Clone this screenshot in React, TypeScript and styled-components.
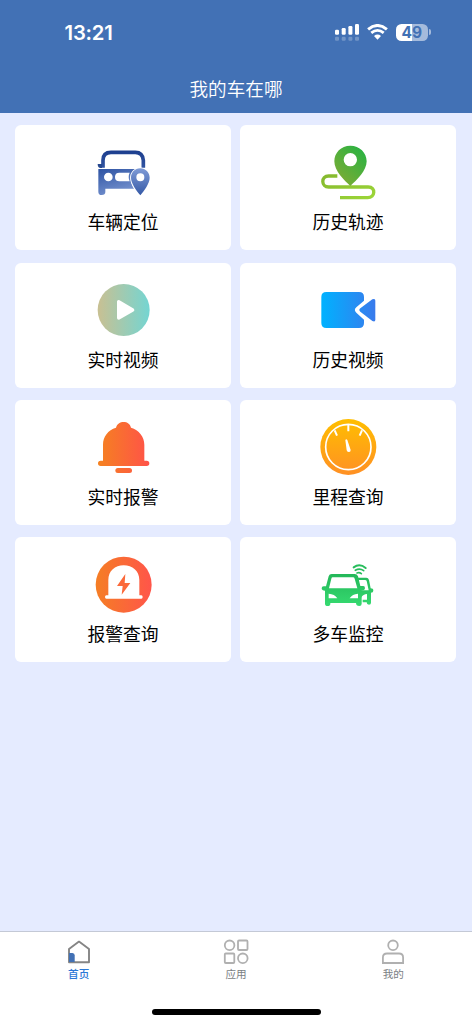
import React from 'react';
import styled, { createGlobalStyle } from 'styled-components';

const GlobalStyle = createGlobalStyle`
  * { box-sizing: border-box; }
  body {
    margin: 0;
    font-family: "Noto Sans CJK SC", sans-serif;
    background: #e5ebff;
  }
`;

const Screen = styled.div`
  display: flex;
  flex-direction: column;
  width: 100%;
  height: 1024px;
  background: #e5ebff;
  overflow: hidden;
`;

const Header = styled.header`
  display: flex;
  flex-direction: column;
  height: 113px;
  flex: none;
  background: #4271b5;
  color: #fff;
`;

const StatusBar = styled.div`
  display: flex;
  align-items: center;
  justify-content: space-between;
  height: 64px;
  padding: 0 41.5px 0 64.5px;
`;

const Clock = styled.span`
  padding-top: 1px;
  font: 600 20.3px/24px Inter, sans-serif;
  letter-spacing: -0.2px;
`;

const StatusIcons = styled.div`
  display: flex;
  align-items: center;
  gap: 8px;
`;

const Battery = styled.div`
  display: flex;
  align-items: center;
`;

const BatteryBody = styled.div<{ $level: number }>`
  width: 31.5px;
  height: 17px;
  border-radius: 5.5px;
  text-align: center;
  font: 700 15.5px/17px Inter, sans-serif;
  color: #4271b5;
  background: ${(p) => `linear-gradient(90deg, #fff ${p.$level}%, #a5bbdc ${p.$level}%)`};
`;

const BatteryTip = styled.div`
  width: 2px;
  height: 6px;
  margin-left: 1px;
  border-radius: 0 2px 2px 0;
  background: #a5bbdc;
`;

const Title = styled.h1`
  margin: 10px 0 0;
  text-align: center;
  font-size: 18.6px;
  line-height: 28px;
  font-weight: 350;
`;

const Grid = styled.main`
  flex: 1;
  display: grid;
  grid-template-columns: 1fr 1fr;
  grid-auto-rows: 125px;
  gap: 12.3px 9px;
  padding: 12.4px 16px 0 15px;
`;

const Card = styled.section`
  display: flex;
  flex-direction: column;
  align-items: center;
  padding-top: 18px;
  border-radius: 6px;
  background: #fff;
`;

const CardIcon = styled.svg`
  width: 60px;
  height: 60px;
  flex: none;
`;

const Label = styled.span`
  margin-top: 5px;
  font-size: 17.8px;
  line-height: 26px;
  color: #000;
`;

const TabBar = styled.nav`
  display: grid;
  grid-template-columns: repeat(3, 1fr);
  height: 76px;
  flex: none;
  padding-top: 7px;
  border-top: 1px solid #c4c9d6;
  background: #fff;
`;

const Tab = styled.div<{ $active?: boolean }>`
  display: flex;
  flex-direction: column;
  align-items: center;
  gap: 1px;
  font-size: 10.6px;
  line-height: 16px;
  font-weight: ${(p) => (p.$active ? 500 : 400)};
  color: ${(p) => (p.$active ? '#2b78d6' : '#7a7e83')};
`;

const TabIcon = styled.svg`
  width: 26px;
  height: 26px;
`;

const HomeArea = styled.footer`
  display: flex;
  justify-content: center;
  height: 17px;
  flex: none;
  padding-top: 2px;
  background: #fff;
`;

const HomeIndicator = styled.div`
  width: 169px;
  height: 6px;
  border-radius: 3px;
  background: #000;
`;

type GradientProps = { id: string; from: string; to: string; x2?: number; y2?: number };
const Gradient = ({ id, from, to, x2 = 1, y2 = 0 }: GradientProps) => (
  <linearGradient id={id} x1="0" y1="0" x2={x2} y2={y2}>
    <stop offset="0" stopColor={from} />
    <stop offset="1" stopColor={to} />
  </linearGradient>
);

const CarPin = () => (
  <CardIcon viewBox="39 24 180 180">
    <defs>
      <linearGradient id="navy" gradientUnits="userSpaceOnUse" x1="0" y1="45" x2="0" y2="105">
        <stop offset="0" stopColor="#1b3d8d" />
        <stop offset="1" stopColor="#3457a4" />
      </linearGradient>
      <linearGradient id="navyPin" gradientUnits="userSpaceOnUse" x1="0" y1="100" x2="0" y2="180">
        <stop offset="0" stopColor="#7f9bd6" />
        <stop offset="1" stopColor="#365aa7" />
      </linearGradient>
      <linearGradient id="navyBody" gradientUnits="userSpaceOnUse" x1="75" y1="100" x2="100" y2="180">
        <stop offset="0" stopColor="#3156a5" />
        <stop offset="1" stopColor="#7390cd" />
      </linearGradient>
    </defs>
    <path d="M69 98V76Q69 52 93 52H166Q188 52 190 76V98" fill="none" stroke="url(#navy)" strokeWidth="11" />
    <path d="M53 87H66V99H60Q53 98 53 87Z" fill="#26488f" />
    <path fill="url(#navyBody)" fillRule="evenodd" d="M55 102H172Q151 108 151 127Q151 145 162 161H76V171Q76 180 65 180Q55 180 55 170ZM85 113A13 13 0 1 0 85 139A13 13 0 1 0 85 113ZM118 113Q105 113 105 126Q105 139 118 139H149Q143 126 149 113Z" />
    <path fill="url(#navyPin)" stroke="#fff" strokeWidth="5" paintOrder="stroke" fillRule="evenodd" d="M181 100C164 100 153 113 153 128C153 145 169 167 181 181C193 167 209 145 209 128C209 113 197 100 181 100ZM181 115A12 12 0 1 1 181 139A12 12 0 1 1 181 115Z" />
  </CardIcon>
);

const RoutePin = () => (
  <CardIcon viewBox="54 24 180 180">
    <defs>
      <Gradient id="route" from="#85b92e" to="#9cd638" y2={1} />
      <linearGradient id="pin" x1="1" y1="0" x2="0.3" y2="0.9">
        <stop offset="0" stopColor="#20b344" />
        <stop offset="1" stopColor="#76ac35" />
      </linearGradient>
    </defs>
    <path d="M112 123H86C62 123 63 156 86 156H205C228 156 226 188 203 188H120" fill="none" stroke="url(#route)" strokeWidth="10" />
    <path fill="url(#pin)" fillRule="evenodd" d="M151 32C123 32 103 53 103 79C103 108 132 135 151 153C170 135 200 108 200 79C200 53 179 32 151 32ZM151 54A20 20 0 1 1 151 94A20 20 0 1 1 151 54Z" />
  </CardIcon>
);

const Play = () => (
  <CardIcon viewBox="39 27 180 180">
    <defs><Gradient id="play" from="#c9c092" to="#74d5d2" /></defs>
    <circle cx="131" cy="114" r="78" fill="url(#play)" />
    <path d="M116 89V138L158 114Z" fill="#fff" stroke="#fff" strokeWidth="10" strokeLinejoin="round" />
  </CardIcon>
);

const Camera = () => (
  <CardIcon viewBox="54 27 180 180">
    <defs>
      <linearGradient id="camera" gradientUnits="userSpaceOnUse" x1="64" y1="0" x2="226" y2="0">
        <stop offset="0" stopColor="#00b2ff" />
        <stop offset="1" stopColor="#397aec" />
      </linearGradient>
    </defs>
    <path fill="url(#camera)" d="M79 60H177Q192 60 192 75V86L169 106Q160 114 169 122L192 143V153Q192 168 177 168H79Q64 168 64 153V75Q64 60 79 60Z" />
    <path fill="url(#camera)" d="M217 82Q226 78 226 86V143Q226 151 217 147L181 119Q175 114 181 109Z" />
  </CardIcon>
);

const Bell = () => (
  <CardIcon viewBox="39 24 180 180">
    <defs>
      <linearGradient id="bell" gradientUnits="userSpaceOnUse" x1="54" y1="0" x2="208" y2="0">
        <stop offset="0" stopColor="#f58220" />
        <stop offset="1" stopColor="#ff5249" />
      </linearGradient>
    </defs>
    <path fill="url(#bell)" d="M69 152V104C69 80 84 60 108 53C113 30 149 30 153 53C177 60 193 80 193 104V152H200A8 8 0 0 1 200 168H62A8 8 0 0 1 62 152Z" />
    <rect x="106" y="174" width="50" height="15" rx="7.5" fill="url(#bell)" />
  </CardIcon>
);

const Gauge = () => (
  <CardIcon viewBox="54 24 180 180">
    <defs><Gradient id="gauge" from="#ffbe00" to="#ff9024" x2={0} y2={1} /></defs>
    <circle cx="145" cy="111" r="84" fill="url(#gauge)" />
    <g fill="none" stroke="#fff">
      <circle cx="145" cy="111" r="68" strokeWidth="5" />
      <path d="M145 45V64M104 61L111 77M186 61L179 77" strokeWidth="6" />
    </g>
    <path d="M136 90Q139 86 142 90L152 120Q152 127 146 126Q141 126 140 121Z" fill="#fff" />
  </CardIcon>
);

const Siren = () => (
  <CardIcon viewBox="39 30 180 180">
    <defs><Gradient id="siren" from="#f57e24" to="#ff554a" /></defs>
    <circle cx="131" cy="119" r="84" fill="url(#siren)" />
    <path fill="#fff" d="M85 151V105C85 78 105 61 131 61C157 61 178 78 178 105V151H184Q188 151 188 156Q188 161 184 161H79Q75 161 75 156Q75 151 79 151Z" />
    <path fill="#fb693a" d="M136 87L111 123H128L125 149L151 114H134Z" />
  </CardIcon>
);

const Cars = () => (
  <CardIcon viewBox="54 30 180 180">
    <defs>
      <linearGradient id="cars" gradientUnits="userSpaceOnUse" x1="0" y1="80" x2="0" y2="183">
        <stop offset="0" stopColor="#22b557" />
        <stop offset="1" stopColor="#36da70" />
      </linearGradient>
    </defs>
    <path fill="url(#cars)" fillRule="evenodd" d="M95 87H164Q171 87 174 94L181 123H190Q195 123 195 130Q195 137 185 136V176Q185 183 178 183Q168 183 168 174H91V176Q91 183 83 183Q75 183 75 176V137Q65 137 65 130Q65 124 71 124H78L86 94Q88 87 95 87ZM98 97Q95 97 94 101L87 130H172L164 101Q163 97 159 97ZM86 146V160H112Q104 147 86 146ZM174 146Q157 147 149 160H174Z" />
    <path fill="url(#cars)" fillRule="evenodd" d="M171 98H199Q205 98 207 105L212 130Q220 130 220 137Q220 143 213 143V173Q213 179 207 179Q200 179 200 172H188V164H201V147Q190 147 183 158V136H206L200 108Q199 105 195 105H173Z" />
    <g fill="none" stroke="#27bd5c" strokeLinecap="round">
      <path d="M161 67Q179 54 197 69" strokeWidth="6" />
      <path d="M166 76Q179 68 191 77" strokeWidth="5" />
      <path d="M171 84Q178 81 184 86" strokeWidth="5" />
    </g>
  </CardIcon>
);

const features: [string, React.FC][] = [
  ['车辆定位', CarPin],
  ['历史轨迹', RoutePin],
  ['实时视频', Play],
  ['历史视频', Camera],
  ['实时报警', Bell],
  ['里程查询', Gauge],
  ['报警查询', Siren],
  ['多车监控', Cars],
];

const Signal = () => (
  <svg width="24.5" height="17" viewBox="0 0 24.5 17" fill="#fff">
    <rect x="0" y="5.7" width="4" height="5" rx="1.2" />
    <rect x="6.7" y="4" width="4" height="6.7" rx="1.2" />
    <rect x="13.4" y="2" width="4" height="8.7" rx="1.2" />
    <rect x="20" y="0" width="4" height="10.7" rx="1.2" />
    <g opacity="0.25">
      {[0, 6.7, 13.4, 20].map((x) => <rect key={x} x={x} y="12.7" width="4" height="4" rx="1.2" />)}
    </g>
  </svg>
);

const Wifi = () => (
  <svg width="21" height="16" viewBox="0 0 21 16" fill="none" stroke="#fff">
    <path d="M1.1 5.3Q10.5 -2.3 19.9 5.3" strokeWidth="3" />
    <path d="M4.3 8.9Q10.5 3.8 16.7 8.9" strokeWidth="2.8" />
    <path d="M7 12Q10.5 9.1 14 12L10.5 15.7Z" fill="#fff" stroke="none" />
  </svg>
);

export default function App() {
  return (
    <Screen>
      <GlobalStyle />
      <Header>
        <StatusBar>
          <Clock>13:21</Clock>
          <StatusIcons>
            <Signal />
            <Wifi />
            <Battery>
              <BatteryBody $level={50}>49</BatteryBody>
              <BatteryTip />
            </Battery>
          </StatusIcons>
        </StatusBar>
        <Title>我的车在哪</Title>
      </Header>
      <Grid>
        {features.map(([name, Icon]) => (
          <Card key={name}>
            <Icon />
            <Label>{name}</Label>
          </Card>
        ))}
      </Grid>
      <TabBar>
        <Tab $active>
          <TabIcon viewBox="0 0 26 26">
            <path d="M3 23.2V10L13 2.6L23 10V23.2Z" fill="none" stroke="#858585" strokeWidth="1.9" strokeLinejoin="round" />
            <path d="M3 14H6.5Q8.7 14 8.7 16.5V23H3Z" fill="#4271b5" />
          </TabIcon>
          首页
        </Tab>
        <Tab>
          <TabIcon viewBox="0 0 26 26" fill="none" stroke="#b0b0b0" strokeWidth="1.8">
            <circle cx="6.6" cy="6.3" r="4.8" />
            <rect x="15" y="1.5" width="9.5" height="9.5" rx="1" />
            <rect x="1.8" y="14.5" width="9.5" height="9.5" rx="1" />
            <circle cx="19.8" cy="19.3" r="4.8" />
          </TabIcon>
          应用
        </Tab>
        <Tab>
          <TabIcon viewBox="0 0 26 26" fill="none" stroke="#b0b0b0" strokeWidth="1.8">
            <circle cx="13" cy="6.3" r="4.8" />
            <path d="M2.9 24V18.5Q2.9 14.5 7 14.5H19Q23.1 14.5 23.1 18.5V24Z" />
          </TabIcon>
          我的
        </Tab>
      </TabBar>
      <HomeArea><HomeIndicator /></HomeArea>
    </Screen>
  );
}
